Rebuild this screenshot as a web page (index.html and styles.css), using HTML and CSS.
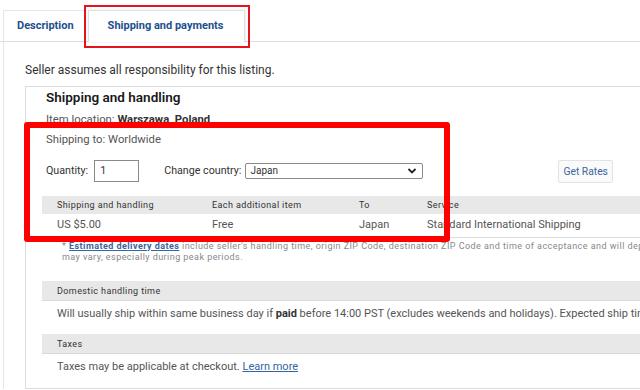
FILE: index.html
```html
<!DOCTYPE html>
<html lang="en">
  <head>
    <meta charset="utf-8" />
    <meta name="viewport" content="width=device-width" />
    <title>Shipping and payments</title>
    <link rel="stylesheet" href="styles.css">
  </head>

  <body>
    <div class="page">
      <ul class="tabs">
        <li class="tab">Description</li>
        <li class="tab active">Shipping and payments</li>
      </ul>

      <section class="panel">
        <p class="seller">Seller assumes all responsibility for this listing.</p>

        <div class="card">
          <h2>Shipping and handling</h2>
          <p class="info">Item location: <b>Warszawa, Poland</b></p>
          <p class="info">Shipping to: Worldwide</p>

          <div class="rates">
            <label>Quantity:</label>
            <div class="qty">1</div>
            <label class="country">Change country:</label>
            <div class="select">
              <span>Japan</span>
              <svg width="10" height="8" viewBox="0 0 10 8"><path d="M1.5 2 L5 5.5 L8.5 2" fill="none" stroke="#222" stroke-width="1.8"/></svg>
            </div>
            <button class="get-rates">Get Rates</button>
          </div>

          <table class="ship-table">
            <colgroup>
              <col style="width: 155px">
              <col style="width: 147px">
              <col style="width: 68px">
              <col>
            </colgroup>
            <tr>
              <th>Shipping and handling</th>
              <th>Each additional item</th>
              <th>To</th>
              <th>Service</th>
            </tr>
            <tr>
              <td>US $5.00</td>
              <td>Free</td>
              <td>Japan</td>
              <td>Standard International Shipping</td>
            </tr>
          </table>

          <p class="note">
            <span class="line">* <a href="#">Estimated delivery dates</a> include seller's handling time, origin ZIP Code, destination ZIP Code and time of acceptance and will depend on shipping service selected.</span>
            <span class="line">may vary, especially during peak periods.</span>
          </p>

          <div class="block">
            <div class="block-head">Domestic handling time</div>
            <div class="block-body">Will usually ship within same business day if <b>paid</b> before 14:00 PST (excludes weekends and holidays). Expected ship time</div>
          </div>

          <div class="block">
            <div class="block-head">Taxes</div>
            <div class="block-body">Taxes may be applicable at checkout. <a href="#">Learn more</a></div>
          </div>
        </div>
      </section>

      <div class="mark mark-tab"></div>
      <div class="mark mark-rates"></div>
    </div>
  </body>
</html>
```

FILE: styles.css
```css
html {
  box-sizing: border-box;
}

* {
  box-sizing: inherit;
}

body {
  margin: 0;
  background: #fff;
  color: #333;
  font: 12px / 16px Roboto, "Liberation Sans", Arial, sans-serif;
}

.page {
  position: relative;
  width: 640px;
  height: 390px;
  overflow: hidden;
}

/* tabs */

.tabs {
  list-style: none;
  margin: 0;
  padding: 10px 0 0 3px;
  display: flex;
  gap: 3px;
  border-bottom: 1px solid #dedede;
}

.tab {
  height: 31px;
  line-height: 30px;
  padding: 0 10px 0 13px;
  border: 1px solid #e6e6e6;
  border-bottom: none;
  color: #1e4f8e;
  font-weight: bold;
  font-size: 11px;
}

.tab.active {
  padding: 0 21px 0 19px;
  margin-bottom: -1px;
  height: 32px;
  background: #fff;
  border-color: #e0e0e0;
  box-shadow: 1px 0 2px rgba(0, 0, 0, 0.08), -1px 0 2px rgba(0, 0, 0, 0.05);
}

/* panel */

.panel {
  margin-left: 3px;
  border-left: 1px solid #e6e6e6;
  padding: 20px 0 0 21px;
}

.seller {
  margin: 0;
  color: #333;
}

.card {
  width: 700px;
  margin-top: 8px;
  border: 1px solid #dcdcdc;
  padding: 0 0 9px 16px;
}

.card h2 {
  margin: 1px 0 0 4px;
  font-size: 13.5px;
  line-height: 18px;
  font-weight: 600;
  color: #191919;
}

.info {
  margin: 6px 0 0 4px;
  font-size: 11.3px;
  color: #555;
}

.info + .info {
  margin-top: 4px;
}

.info b {
  color: #333;
}

/* quantity and country */

.rates {
  display: flex;
  align-items: center;
  height: 24px;
  margin: 11px 0 0 4px;
  font-size: 10.7px;
  color: #333;
}

.qty {
  width: 45px;
  height: 22px;
  margin-left: 6px;
  border: 1px solid #8a8a8a;
  padding-left: 5px;
  line-height: 20px;
}

.country {
  margin-left: 25px;
}

.select {
  display: flex;
  align-items: center;
  justify-content: space-between;
  width: 178px;
  height: 16px;
  margin-left: 4px;
  padding: 0 5px 0 4px;
  border: 1px solid #8a8a8a;
  border-radius: 2px;
  font-size: 10px;
}

.get-rates {
  height: 23px;
  margin-left: 135px;
  padding: 0 4px;
  background: #fafafa;
  border: 1px solid #e2e2e2;
  border-radius: 2px;
  color: #3a65a0;
  font: 10.3px Roboto, "Liberation Sans", Arial, sans-serif;
}

/* table */

.ship-table {
  width: 680px;
  margin-top: 13px;
  border-collapse: collapse;
  table-layout: fixed;
}

.ship-table th {
  height: 18px;
  padding: 0 0 0 15px;
  background: #e8e8e8;
  text-align: left;
  font-size: 9px;
  font-weight: normal;
  letter-spacing: 0.4px;
  color: #333;
}

.ship-table td {
  height: 23px;
  padding: 0 0 0 15px;
  border-bottom: 1px solid #dcdcdc;
  color: #555;
  font-size: 11px;
}

.note {
  margin: 3px 0 0 20px;
  font-size: 9px;
  line-height: 11px;
  letter-spacing: 0.45px;
  color: #888;
}

.note .line {
  display: block;
  white-space: nowrap;
}

.note a {
  color: #3665a0;
  font-weight: bold;
}

/* blocks */

.block {
  margin-top: 8px;
}

.note + .block {
  margin-top: 18px;
}

.block-head {
  height: 20px;
  line-height: 20px;
  padding-left: 15px;
  background: #e8e8e8;
  border-bottom: 1px solid #d8d8d8;
  font-size: 9px;
  letter-spacing: 0.4px;
  color: #333;
}

.block-body {
  height: 25px;
  line-height: 25px;
  padding-left: 15px;
  font-size: 11px;
  color: #555;
  white-space: nowrap;
}

.block-body b {
  color: #333;
}

.block-body a {
  color: #3665a0;
}

/* annotation boxes */

.mark {
  position: absolute;
  border: 2px solid #e3141c;
}

.mark-tab {
  left: 84px;
  top: 5px;
  width: 166px;
  height: 43px;
}

.mark-rates {
  left: 24px;
  top: 122px;
  width: 426px;
  height: 120px;
  border-width: 6px;
  border-color: #f00;
  border-radius: 3px;
}
```
